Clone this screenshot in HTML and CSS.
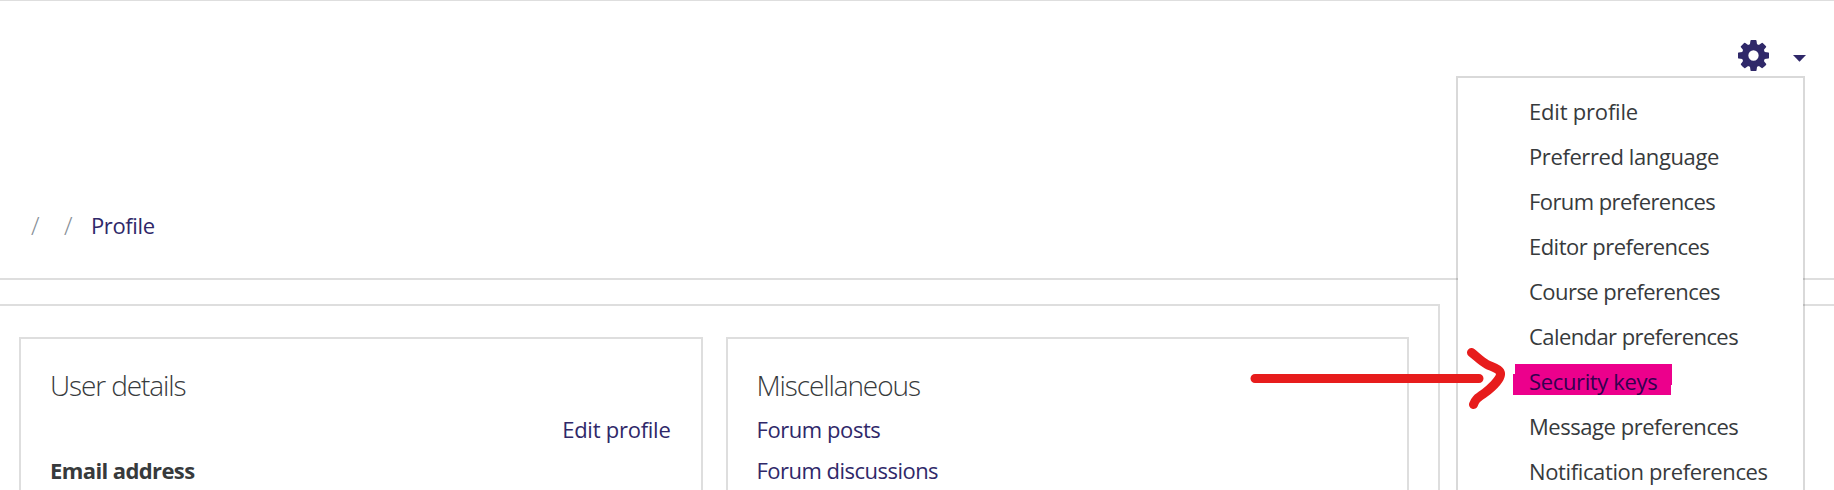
FILE: index.html
```
<!DOCTYPE html>
<html lang="en">
<head>
<meta charset="utf-8">
<title>Profile</title>
<link rel="stylesheet" href="styles.css">
</head>
<body>
<header class="page-header">
  <div class="settings">
    <svg class="gear" viewBox="128 128 1536 1536"><path d="M1152 896q0-106-75-181t-181-75-181 75-75 181 75 181 181 75 181-75 75-181zm512-109v222q0 12-8 23t-20 13l-185 28q-19 54-39 91 35 50 107 138 10 12 10 25t-9 23q-27 37-99 108t-94 71q-12 0-26-9l-138-108q-44 23-91 38-16 136-29 186-7 28-36 28h-222q-14 0-24.500-8.500t-11.500-21.500l-28-184q-49-16-90-37l-141 107q-10 9-25 9-14 0-25-11-126-114-165-168-7-10-7-23 0-12 8-23 15-21 51-66.500t54-70.500q-27-50-41-99l-183-27q-13-2-21-12.500t-8-23.500v-222q0-12 8-23t19-13l186-28q14-46 39-92-40-57-107-138-10-12-10-24 0-10 9-23 26-36 98.500-107.500t94.500-71.500q13 0 26 10l138 107q44-23 91-38 16-136 29-186 7-28 36-28h222q14 0 24.500 8.500t11.500 21.500l28 184q49 16 90 37l142-107q9-9 24-9 13 0 25 10 129 119 165 170 7 8 7 22 0 12-8 23-15 21-51 66.500t-54 70.500q26 50 41 98l183 28q13 2 21 12.500t8 23.500z"/></svg>
    <svg class="caret" viewBox="0 0 13 7"><path d="M0 0H13L6.500 6.700z"/></svg>
    <nav class="menu">
      <a class="item edit">Edit profile</a>
      <a class="item language">Preferred language</a>
      <a class="item forum">Forum preferences</a>
      <a class="item editor">Editor preferences</a>
      <a class="item course">Course preferences</a>
      <a class="item calendar">Calendar preferences</a>
      <a class="item security">Security keys</a>
      <a class="item message">Message preferences</a>
      <a class="item notification">Notification preferences</a>
    </nav>
  </div>
  <div class="breadcrumb"><span class="sep">/</span><span class="sep">/</span><a class="crumb">Profile</a></div>
</header>
<main class="page">
  <section class="content">
    <article class="card">
      <h3 class="title user">User details</h3>
      <a class="link edit-link">Edit profile</a>
      <b class="label">Email address</b>
    </article>
    <article class="card">
      <h3 class="title misc">Miscellaneous</h3>
      <a class="link posts">Forum posts</a>
      <a class="link discussions">Forum discussions</a>
    </article>
  </section>
  <aside class="side"></aside>
</main>
<svg class="arrow" viewBox="1250 345 260 70"><path d="M1255 378.500H1479M1471.500 352.500C1477 357 1482 362 1487 364.500C1493 367.500 1501 369 1500.500 374.500C1500 380 1490 389 1484 393.500C1477 398 1475 400 1473.500 404.500"/></svg>
</body>
</html>
```
FILE: styles.css
```
* { box-sizing: border-box; }
body {
  margin: 0;
  height: 490px;
  overflow: hidden;
  position: relative;
  background: #fff;
  color: #373a3c;
  font: 22px/34px "Open Sans", "Noto Sans", sans-serif;
}
.page-header {
  height: 280px;
  display: flex;
  flex-direction: column;
  justify-content: space-between;
  border-top: 1px solid #dedede;
  border-bottom: 2px solid #dedede;
}
.settings {
  position: relative;
  display: flex;
  justify-content: flex-end;
  align-items: flex-start;
  gap: 24px;
  padding: 39px 28px 0 0;
  fill: #2f2869;
}
.gear { width: 31px; height: 31px; }
.caret { width: 13px; height: 7px; margin-top: 15px; }
.menu {
  position: absolute;
  z-index: 1;
  top: 75px;
  right: 29px;
  width: 349px;
  height: 414px;
  padding: 11px 0 0 71px;
  display: flex;
  flex-direction: column;
  border: 2px solid rgba(0, 0, 0, .15);
  border-bottom: 0;
  background: #fff;
  background-clip: padding-box;
}
.item { flex: none; height: 45px; line-height: 45px; white-space: nowrap; }
.item:last-child { height: 40px; }
.edit { letter-spacing: -.2px; }
.language { letter-spacing: -.4px; }
.forum { letter-spacing: -.57px; }
.editor { letter-spacing: -.53px; }
.course { letter-spacing: -.55px; }
.calendar { letter-spacing: -.58px; }
.message { letter-spacing: -.46px; }
.notification { letter-spacing: -.37px; }
.security { position: relative; z-index: 0; color: #33004f; letter-spacing: -.36px; }
.security::before {
  content: "";
  position: absolute;
  z-index: -1;
  left: -16px;
  top: 5px;
  width: 159px;
  height: 31px;
  background: #ec008c;
  clip-path: polygon(2px 0, 100% 0, 100% 21px, 158px 21px, 158px 100%, 0 100%, 0 10px, 2px 10px);
}
.breadcrumb { display: flex; height: 70px; padding-left: 31px; }
.sep { width: 33px; color: #868e96; font-size: 25px; font-weight: 300; }
.crumb { color: #2f2869; margin-left: -6px; letter-spacing: -.38px; }
.page { display: flex; gap: 24px; margin: 24px 0 0 -12px; height: 186px; }
.content {
  width: 1452px;
  display: flex;
  gap: 23px;
  padding: 31px 29px 0;
  border: 2px solid #dedede;
  border-bottom: 0;
}
.card {
  flex: 1;
  display: flex;
  flex-direction: column;
  padding: 27px 30px 0 29px;
  border: 2px solid #dedede;
  border-bottom: 0;
}
.side { flex: 1; border: 2px solid #dedede; border-right: 0; border-bottom: 0; }
.title { flex: none; margin: 0; height: 46px; font-size: 28px; line-height: 38px; font-weight: 300; letter-spacing: -1.1px; }
.link { flex: none; height: 41px; line-height: 34px; color: #2f2869; }
.link:last-child { height: 34px; }
.edit-link { align-self: flex-end; letter-spacing: -.25px; }
.posts { letter-spacing: -.43px; }
.discussions { letter-spacing: -.52px; }
.label { font-weight: 700; letter-spacing: -.6px; }
.arrow {
  position: absolute;
  z-index: 2;
  left: 1250px;
  top: 345px;
  width: 260px;
  height: 70px;
  fill: none;
  stroke: #e71c1c;
  stroke-width: 9px;
  stroke-linecap: round;
  stroke-linejoin: round;
}
```
